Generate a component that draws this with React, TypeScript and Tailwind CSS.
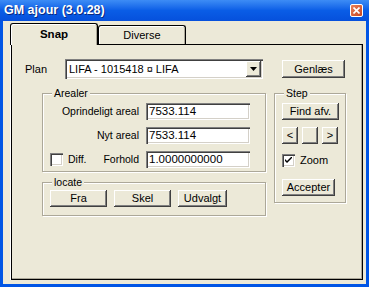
import React from 'react';

const raised =
  'bg-[#ECE9D8] shadow-[inset_-1px_-1px_0_#404040,inset_1px_1px_0_#fff,inset_-2px_-2px_0_#808080]';
const sunken =
  'bg-white shadow-[inset_1px_1px_0_#808080,inset_2px_2px_0_#404040,inset_-1px_-1px_0_#fff,inset_-2px_-2px_0_#d4d0c8]';

function Button({ label, className = '' }: { label: string; className?: string }) {
  return (
    <div className={`${raised} h-[17px] flex items-center justify-center text-[11px] leading-none ${className}`}>
      {label}
    </div>
  );
}

function Checkbox({ checked }: { checked?: boolean }) {
  return (
    <div className={`${sunken} w-[13px] h-[13px] shrink-0 flex items-center justify-center`}>
      {checked && (
        <svg width="7" height="7" viewBox="0 0 7 7">
          <path d="M0 2 L0 4 L2 6 L7 1 L7 -1 L2 4 Z" fill="#000" />
        </svg>
      )}
    </div>
  );
}

function GroupBox({ title, className = '', children }: { title: string; className?: string; children: React.ReactNode }) {
  return (
    <div
      className={`relative border border-[#aca899] shadow-[1px_1px_0_#fff,inset_1px_1px_0_#fff] ${className}`}
    >
      <span className="absolute -top-[7px] left-[9px] px-[2px] bg-[#ECE9D8] leading-[12px]">{title}</span>
      {children}
    </div>
  );
}

function Field({ value }: { value: string }) {
  return (
    <div className={`${sunken} w-[104px] h-[17px] ml-[7px] flex items-center pl-[3px] text-[11.5px] leading-none`}>
      {value}
    </div>
  );
}

export default function App() {
  return (
    <div className="w-[369px] h-[287px] flex flex-col bg-[#0055E5] font-['Liberation_Sans',Arial,sans-serif] text-[10.5px] text-black">
      {/* caption */}
      <div className="h-[21px] shrink-0 flex items-start justify-between pt-[4px] pl-[4px] pr-[6px] bg-gradient-to-b from-[#3d8cf5] via-[#0a5de6] to-[#0650dc]">
        <span className="text-white font-bold text-[12.5px] leading-[13px] [text-shadow:1px_1px_0_#0a2a80]">
          GM ajour (3.0.28)
        </span>
        <div className="w-[13px] h-[13px] rounded-[2px] border border-white bg-gradient-to-br from-[#e8805a] to-[#c9441c] flex items-center justify-center">
          <svg width="7" height="7" viewBox="0 0 7 7">
            <path d="M0.5 0.5 L6.5 6.5 M6.5 0.5 L0.5 6.5" stroke="#fff" strokeWidth="1.6" />
          </svg>
        </div>
      </div>

      {/* client */}
      <div className="flex-1 mx-[3px] mb-[3px] bg-[#ECE9D8] flex flex-col pt-[1px] pl-[7px] pr-[3px] pb-[4px]">
        {/* tabs */}
        <div className="h-[22px] flex items-end">
          <div className="relative z-10 -mb-[1px] w-[88px] h-[22px] bg-[#ECE9D8] border border-b-0 border-black rounded-t-[3px] shadow-[inset_1px_1px_0_#fff,inset_-1px_0_0_#aca899] flex items-center justify-center font-bold text-[11.5px]">
            Snap
          </div>
          <div className="w-[88px] h-[19px] bg-[#ECE9D8] border border-b-0 border-black rounded-t-[3px] shadow-[inset_1px_1px_0_#fff,inset_-1px_0_0_#aca899] flex items-center justify-center text-[11px]">
            Diverse
          </div>
        </div>

        {/* panel */}
        <div className="flex-1 flex border-l border-white">
          <div className="flex-1 border border-black shadow-[inset_-1px_-1px_0_#aca899] flex flex-col">
            {/* plan row */}
            <div className="mt-[14px] h-[20px] flex items-center pl-[13px]">
              <span className="w-[40px] text-[11px]">Plan</span>
              <div className={`${sunken} w-[198px] h-[20px] flex items-center justify-between pl-[4px] pr-[2px]`}>
                <span className="text-[11px] leading-none">LIFA - 1015418 ¤ LIFA</span>
                <div className={`${raised} w-[15px] h-[16px] flex items-center justify-center`}>
                  <svg width="7" height="4" viewBox="0 0 7 4">
                    <path d="M0 0 H7 L3.5 4 Z" fill="#000" />
                  </svg>
                </div>
              </div>
              <Button label="Genlæs" className="ml-[19px] w-[63px] h-[18px]" />
            </div>

            {/* lower section */}
            <div className="mt-[14px] flex items-start pl-[30px]">
              <div className="flex flex-col">
                <GroupBox title="Arealer" className="w-[224px] pt-[9px] pb-[3px]">
                  <div className="flex flex-col gap-[7px]">
                    <div className="flex items-center">
                      <span className="w-[96px] text-right">Oprindeligt areal</span>
                      <Field value="7533.114" />
                    </div>
                    <div className="flex items-center">
                      <span className="w-[96px] text-right">Nyt areal</span>
                      <Field value="7533.114" />
                    </div>
                    <div className="flex items-center">
                      <div className="w-[96px] flex items-center pl-[7px]">
                        <Checkbox />
                        <span className="ml-[5px]">Diff.</span>
                        <span className="ml-auto">Forhold</span>
                      </div>
                      <Field value="1.0000000000" />
                    </div>
                  </div>
                </GroupBox>

                <GroupBox title="locate" className="mt-[10px] w-[224px] pt-[7px] pb-[8px] pl-[7px]">
                  <div className="flex gap-[7px]">
                    <Button label="Fra" className="w-[57px]" />
                    <Button label="Skel" className="w-[57px]" />
                    <Button label="Udvalgt" className="w-[49px]" />
                  </div>
                </GroupBox>
              </div>

              <GroupBox title="Step" className="ml-[8px] w-[72px] pt-[9px] pb-[6px] pl-[7px]">
                <div className="flex flex-col">
                  <Button label="Find afv." className="w-[57px]" />
                  <div className="mt-[7px] flex gap-[4px]">
                    <Button label="<" className="w-[16px]" />
                    <Button label="" className="w-[16px]" />
                    <Button label=">" className="w-[16px]" />
                  </div>
                  <div className="mt-[8px] flex items-center">
                    <Checkbox checked />
                    <span className="ml-[5px] text-[11px]">Zoom</span>
                  </div>
                  <Button label="Accepter" className="mt-[10px] w-[53px]" />
                </div>
              </GroupBox>
            </div>
          </div>
        </div>
      </div>
    </div>
  );
}
